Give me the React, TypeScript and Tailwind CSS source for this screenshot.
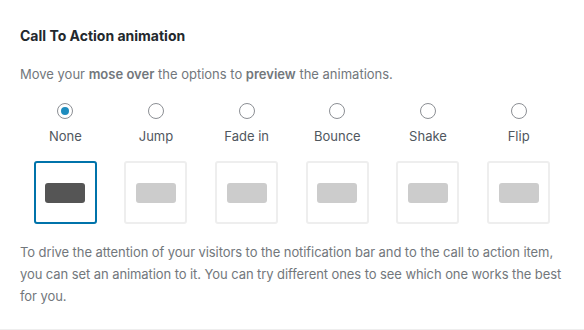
const options = ["None", "Jump", "Fade in", "Bounce", "Shake", "Flip"];

const Radio: React.FC<{ checked: boolean }> = ({ checked }) => (
  <span className="flex h-4 w-4 items-center justify-center rounded-full border border-[#8c8f94] bg-white">
    {checked && <span className="h-2 w-2 rounded-full bg-[#1e8cbe]" />}
  </span>
);

export default function App() {
  const selected = "None";

  return (
    <div
      className="h-[330px] w-[584px] border-b border-[#eeeeee] bg-white px-5 text-[13px] text-[#72777c]"
      style={{ fontFamily: "Inter, 'Liberation Sans', sans-serif" }}
    >
      <h3 className="pt-[26px] text-[14px] leading-5 font-bold text-[#23282d]">
        Call To Action animation
      </h3>
      <p className="mt-[18px] leading-5">
        Move your <strong className="font-semibold">mose over</strong> the
        options to <strong className="font-semibold">preview</strong> the
        animations.
      </p>

      <div className="mt-[19px] grid grid-cols-6">
        {options.map((name) => {
          const active = name === selected;
          return (
            <label key={name} className="flex flex-col items-center">
              <Radio checked={active} />
              <span className="mt-[7px] leading-5 text-[#50575e]">{name}</span>
              <span
                className={
                  active
                    ? "mt-[15px] flex h-[63px] w-[63px] items-center justify-center rounded-[3px] border-2 border-[#0073aa]"
                    : "mt-[15px] flex h-[63px] w-[63px] items-center justify-center rounded-[3px] border-2 border-[#eeeeee]"
                }
              >
                <span
                  className={
                    active
                      ? "h-5 w-10 rounded-[3px] bg-[#555555]"
                      : "h-5 w-10 rounded-[3px] bg-[#cccccc]"
                  }
                />
              </span>
            </label>
          );
        })}
      </div>

      <p className="mt-[17px] w-[550px] leading-[22px] tracking-[-0.08px]">
        To drive the attention of your visitors to the notification bar and to
        the call to action item, you can set an animation to it. You can try
        different ones to see which one works the best for you.
      </p>
    </div>
  );
}
